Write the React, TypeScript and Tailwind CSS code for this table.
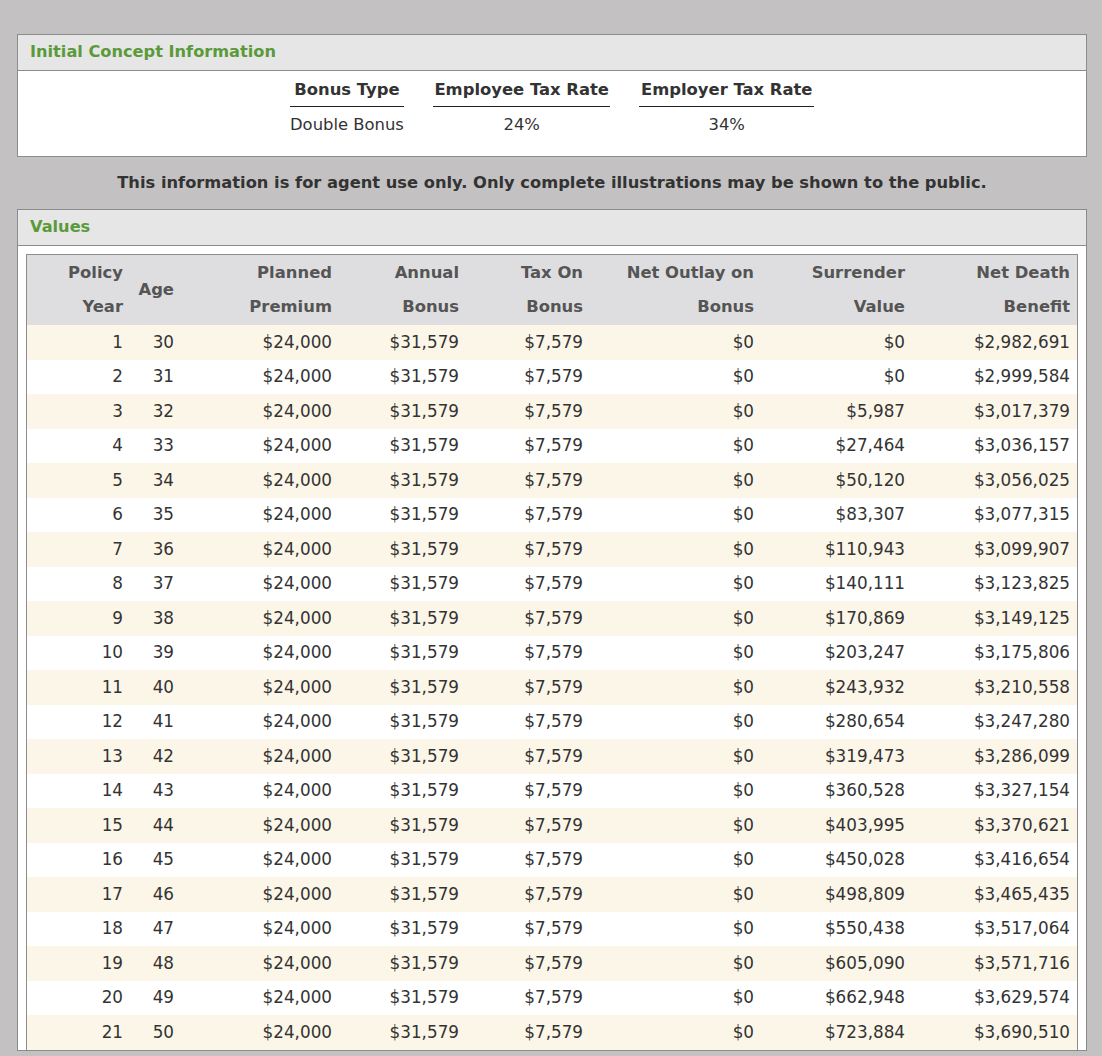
import React from 'react';

const surrender = [
  '$0', '$0', '$5,987', '$27,464', '$50,120', '$83,307', '$110,943', '$140,111', '$170,869', '$203,247',
  '$243,932', '$280,654', '$319,473', '$360,528', '$403,995', '$450,028', '$498,809', '$550,438', '$605,090',
  '$662,948', '$723,884',
];

const deathBenefit = [
  '$2,982,691', '$2,999,584', '$3,017,379', '$3,036,157', '$3,056,025', '$3,077,315', '$3,099,907', '$3,123,825',
  '$3,149,125', '$3,175,806', '$3,210,558', '$3,247,280', '$3,286,099', '$3,327,154', '$3,370,621', '$3,416,654',
  '$3,465,435', '$3,517,064', '$3,571,716', '$3,629,574', '$3,690,510',
];

const rows = surrender.map((sv, i) => ({
  year: i + 1,
  age: 30 + i,
  premium: '$24,000',
  bonus: '$31,579',
  tax: '$7,579',
  outlay: '$0',
  surrender: sv,
  death: deathBenefit[i],
}));

const cols = 'grid grid-cols-[104px_51px_158px_127px_124px_171px_151px_1fr]';

const Panel: React.FC<{ title: string; children: React.ReactNode }> = ({ title, children }) => (
  <div className="border border-[#8c8c8c] bg-white">
    <div className="h-[36px] flex items-center px-[12px] bg-[#e6e6e6] border-b border-[#8c8c8c] text-[16.2px] font-bold text-[#5b9a3b]">
      {title}
    </div>
    {children}
  </div>
);

const App: React.FC = () => {
  const info = [
    { label: 'Bonus Type', value: 'Double Bonus' },
    { label: 'Employee Tax Rate', value: '24%' },
    { label: 'Employer Tax Rate', value: '34%' },
  ];

  return (
    <div className="min-h-screen bg-[#c3c1c2] pt-[34px] pl-[17px] pr-[15px] font-['DejaVu_Sans',Verdana,sans-serif] text-[#333]">
      <Panel title="Initial Concept Information">
        <div className="flex justify-center gap-[29px] pt-[9px] pb-[21px]">
          {info.map(c => (
            <div key={c.label} className="flex flex-col">
              <div className="text-center text-[16.4px] font-bold leading-[20px] pb-[6px] px-[1.5px] border-b border-[#222] text-[#333]">
                {c.label}
              </div>
              <div className="text-center text-[16.4px] leading-[20px] pt-[8px] text-[#333]">{c.value}</div>
            </div>
          ))}
        </div>
      </Panel>

      <div className="h-[52px] flex items-center justify-center text-[16.3px] font-bold text-[#333]">
        This information is for agent use only. Only complete illustrations may be shown to the public.
      </div>

      <Panel title="Values">
        <div className="pt-[8px] px-[8px]">
          <div className="border border-[#8c8c8c] border-b-0">
            {/* encabezado */}
            <div className={`${cols} bg-[#dedee0] text-[#555] font-bold text-[16.4px] leading-[34px] py-[1px] text-right`}>
              <div className="pr-[8px]">Policy<br />Year</div>
              <div className="pr-[8px] flex items-center justify-end">Age</div>
              <div className="pr-[8px]">Planned<br />Premium</div>
              <div className="pr-[8px]">Annual<br />Bonus</div>
              <div className="pr-[8px]">Tax On<br />Bonus</div>
              <div className="pr-[8px]">Net Outlay on<br />Bonus</div>
              <div className="pr-[8px]">Surrender<br />Value</div>
              <div className="pr-[7px]">Net Death<br />Benefit</div>
            </div>
            {rows.map((r, i) => (
              <div
                key={r.year}
                className={`${cols} h-[34.5px] items-center text-right text-[16.8px] ${i % 2 === 0 ? 'bg-[#fcf6e8]' : 'bg-white'}`}
              >
                <div className="pr-[8px]">{r.year}</div>
                <div className="pr-[8px]">{r.age}</div>
                <div className="pr-[8px]">{r.premium}</div>
                <div className="pr-[8px]">{r.bonus}</div>
                <div className="pr-[8px]">{r.tax}</div>
                <div className="pr-[8px]">{r.outlay}</div>
                <div className="pr-[8px]">{r.surrender}</div>
                <div className="pr-[7px]">{r.death}</div>
              </div>
            ))}
          </div>
        </div>
      </Panel>
    </div>
  );
};

export default App;
